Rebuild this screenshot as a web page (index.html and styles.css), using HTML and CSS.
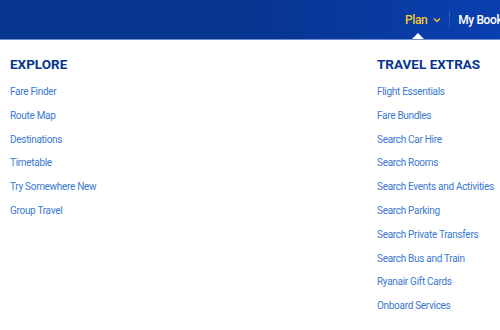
FILE: index.html
```html
<!DOCTYPE html>
<html lang="en">
<head>
    <meta charset="UTF-8">
    <meta name="viewport" content="width=device-width, initial-scale=1.0">
    <title>Plan menu</title>
    <link rel="stylesheet" href="styles.css">
</head>
<body>
    <header class="topbar">
        <nav class="topnav">
            <div class="nav-item active">
                <span>Plan</span>
                <svg class="chevron" width="8" height="6" viewBox="0 0 8 6"><path d="M1 1.5 L4 4.5 L7 1.5" fill="none" stroke="currentColor" stroke-width="1.4"/></svg>
                <span class="caret"></span>
            </div>
            <span class="divider"></span>
            <div class="nav-item">My Bookings</div>
        </nav>
    </header>
    <main class="menu">
        <section class="menu-col">
            <h2>EXPLORE</h2>
            <ul>
                <li><a href="#">Fare Finder</a></li>
                <li><a href="#">Route Map</a></li>
                <li><a href="#">Destinations</a></li>
                <li><a href="#">Timetable</a></li>
                <li><a href="#">Try Somewhere New</a></li>
                <li><a href="#">Group Travel</a></li>
            </ul>
        </section>
        <section class="menu-col extras">
            <h2>TRAVEL EXTRAS</h2>
            <ul>
                <li><a href="#">Flight Essentials</a></li>
                <li><a href="#">Fare Bundles</a></li>
                <li><a href="#">Search Car Hire</a></li>
                <li><a href="#">Search Rooms</a></li>
                <li><a href="#">Search Events and Activities</a></li>
                <li><a href="#">Search Parking</a></li>
                <li><a href="#">Search Private Transfers</a></li>
                <li><a href="#">Search Bus and Train</a></li>
                <li><a href="#">Ryanair Gift Cards</a></li>
                <li><a href="#">Onboard Services</a></li>
            </ul>
        </section>
    </main>
</body>
</html>
```

FILE: styles.css
```css
body {
    font-family: Roboto, 'Liberation Sans', sans-serif;
    margin: 0;
    padding: 0;
    width: 500px;
    height: 330px;
    overflow: hidden;
    background: #fff;
}

.topbar {
    height: 39px;
    background: linear-gradient(90deg, #073590 0%, #073590 50%, #0a3fb0 100%);
    border-bottom: 1px solid #6f8fd0;
    overflow: hidden;
}

.topnav {
    display: flex;
    align-items: center;
    white-space: nowrap;
    padding-left: 405px;
}

.nav-item {
    position: relative;
    display: flex;
    align-items: center;
    gap: 6px;
    color: #fff;
    font-size: 12px;
    letter-spacing: -0.4px;
    font-weight: 500;
    height: 39px;
}

.nav-item.active {
    color: #f1c933;
}

.caret {
    position: absolute;
    bottom: -1px;
    left: 6px;
    width: 0;
    height: 0;
    border-left: 7px solid transparent;
    border-right: 7px solid transparent;
    border-bottom: 7px solid #fff;
}

.divider {
    width: 0;
    height: 16px;
    border-left: 1px dotted #4d6fb8;
    margin: 0 8px;
}

.menu {
    display: flex;
    justify-content: space-between;
    padding: 16px 0 0 10px;
}

.menu-col {
    width: 123px;
}

.menu-col h2 {
    margin: 0 0 11px;
    color: #073590;
    font-size: 13.5px;
    font-weight: 700;
    line-height: 16px;
}

.menu-col ul {
    list-style: none;
    margin: 0;
    padding: 0;
}

.menu-col li {
    height: 23.8px;
    line-height: 14px;
    white-space: nowrap;
}

.menu-col a {
    color: #3a78d2;
    font-size: 10px;
    letter-spacing: -0.3px;
    text-decoration: none;
}
```
